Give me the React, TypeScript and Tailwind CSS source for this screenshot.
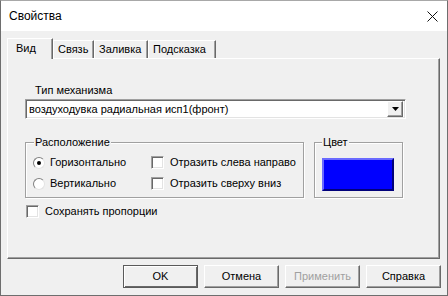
import React from "react";

const raised =
  "border border-t-white border-l-white border-r-[#696969] border-b-[#696969] shadow-[inset_-1px_-1px_0_#a0a0a0]";
const sunken =
  "border border-t-[#a0a0a0] border-l-[#a0a0a0] border-r-white border-b-white shadow-[inset_1px_1px_0_#696969,inset_-1px_-1px_0_#e3e3e3]";

const CheckBox = () => <div className={`h-[13px] w-[13px] shrink-0 bg-white ${sunken}`} />;

const Radio = ({ checked }: { checked?: boolean }) => (
  <div className="flex h-[12px] w-[12px] shrink-0 items-center justify-center rounded-full border border-t-[#808080] border-l-[#808080] border-r-[#e3e3e3] border-b-[#e3e3e3] bg-white">
    {checked && <div className="h-[4px] w-[4px] rounded-full bg-black" />}
  </div>
);

const Tab = ({ text, width, active }: { text: string; width: string; active?: boolean }) => (
  <div
    className={`${width} ${
      active ? "relative z-10 -mb-px h-[21px] pl-[8px] pt-[3px]" : "h-[18px] pl-[4px] pt-[2px]"
    } border-t border-l border-r border-t-white border-l-white border-r-[#696969] bg-[#f0f0f0] leading-[13px] shadow-[inset_-1px_0_0_#a0a0a0]`}
  >
    {text}
  </div>
);

const Button = ({ text, isDefault, disabled }: { text: string; isDefault?: boolean; disabled?: boolean }) => (
  <div
    className={`flex h-[23px] w-[75px] items-center justify-center ${
      isDefault
        ? "border border-[#5a5a5a] shadow-[inset_1px_1px_0_#fff,inset_-1px_-1px_0_#696969]"
        : raised
    } ${disabled ? "text-[#a0a0a0]" : "text-black"}`}
  >
    {text}
  </div>
);

const App = () => {
  return (
    <div className="h-[296px] w-[448px] bg-white font-['Liberation_Sans',Arial,sans-serif] text-[11px] leading-[13px] text-black">
      <div className="flex h-full flex-col border border-[#6e6e6e] border-t-[#a8a8a8]">
        {/* title bar */}
        <div className="flex h-[30px] shrink-0 items-center justify-between bg-white pl-[8px] pr-[9px]">
          <span className="text-[12px]">Свойства</span>
          <svg width="11" height="11" viewBox="0 0 11 11">
            <path d="M0.5 0.5 L10.5 10.5 M10.5 0.5 L0.5 10.5" stroke="#111" strokeWidth="1" />
          </svg>
        </div>

        <div className="flex flex-1 flex-col bg-[#f0f0f0]">
          {/* tabs */}
          <div className="ml-[6px] mt-[7px] flex h-[20px] items-end">
            <Tab text="Вид" width="w-[46px]" active />
            <Tab text="Связь" width="w-[41px]" />
            <Tab text="Заливка" width="w-[54px]" />
            <Tab text="Подсказка" width="w-[68px]" />
          </div>

          {/* tab page */}
          <div className={`ml-[6px] flex h-[201px] w-[433px] flex-col ${raised}`}>
            <div className="ml-[27px] mt-[25px]">Тип механизма</div>
            <div className={`ml-[17px] mt-[2px] flex h-[20px] w-[381px] items-center bg-white pl-[2px] pr-[2px] ${sunken}`}>
              <span className="flex-1 pl-[1px]">воздуходувка радиальная исп1(фронт)</span>
              <div className={`flex h-[16px] w-[16px] items-center justify-center bg-[#f0f0f0] ${raised}`}>
                <svg width="7" height="4" viewBox="0 0 7 4">
                  <path d="M0 0 H7 L3.5 4 Z" fill="#000" />
                </svg>
              </div>
            </div>

            <div className="ml-[17px] mt-[23px] flex gap-[10px]">
              {/* Расположение */}
              <div className="flex h-[56px] w-[279px] flex-col border border-[#a0a0a0] shadow-[1px_1px_0_#fff,inset_1px_1px_0_#fff]">
                <span className="-mt-[7px] ml-[8px] w-fit bg-[#f0f0f0] px-[1px]">Расположение</span>
                <div className="mt-[7px] flex items-center pl-[7px]">
                  <div className="flex w-[118px] items-center">
                    <Radio checked />
                    <span className="ml-[5px]">Горизонтально</span>
                  </div>
                  <CheckBox />
                  <span className="ml-[6px]">Отразить слева направо</span>
                </div>
                <div className="mt-[8px] flex items-center pl-[7px]">
                  <div className="flex w-[118px] items-center">
                    <Radio />
                    <span className="ml-[5px]">Вертикально</span>
                  </div>
                  <CheckBox />
                  <span className="ml-[6px]">Отразить сверху вниз</span>
                </div>
              </div>

              {/* Цвет */}
              <div className="flex h-[56px] w-[89px] flex-col border border-[#a0a0a0] shadow-[1px_1px_0_#fff,inset_1px_1px_0_#fff]">
                <span className="-mt-[7px] ml-[7px] w-fit bg-[#f0f0f0] px-[1px]">Цвет</span>
                <div className="ml-[7px] mt-[9px] h-[33px] w-[72px] border-2 border-t-[#6a6aff] border-l-[#6a6aff] border-r-[#00007a] border-b-[#00007a] bg-[#0000ff]" />
              </div>
            </div>

            <div className="ml-[18px] mt-[7px] flex items-center">
              <CheckBox />
              <span className="ml-[6px]">Сохранять пропорции</span>
            </div>
          </div>

          {/* buttons */}
          <div className="ml-[122px] mt-[6px] flex gap-[6px]">
            <Button text="OK" isDefault />
            <Button text="Отмена" />
            <Button text="Применить" disabled />
            <Button text="Справка" />
          </div>
        </div>
      </div>
    </div>
  );
};

export default App;
